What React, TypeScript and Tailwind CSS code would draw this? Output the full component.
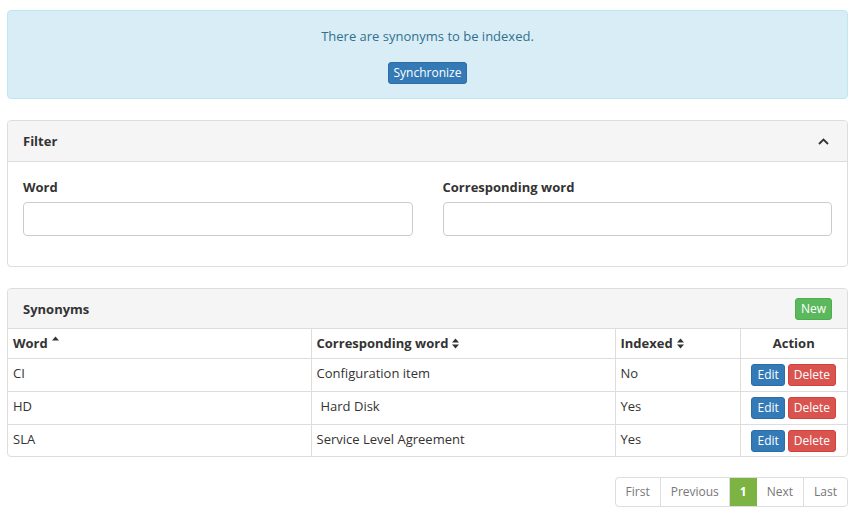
import React from "react";

const SortBoth = () => (
  <svg width="7" height="11" viewBox="0 0 7 11" className="inline-block ml-[4px] -mt-[2px]">
    <path d="M0 4.5 L3.5 0.5 L7 4.5 Z" fill="#333" />
    <path d="M0 6.5 L3.5 10.5 L7 6.5 Z" fill="#333" />
  </svg>
);

const SortUp = () => (
  <svg width="7" height="11" viewBox="0 0 7 11" className="inline-block ml-[4px] -mt-[6px]">
    <path d="M0 4.5 L3.5 0.5 L7 4.5 Z" fill="#333" />
  </svg>
);

const rows = [
  { w: "CI", c: "Configuration item", i: "No", pad: false },
  { w: "HD", c: "Hard Disk", i: "Yes", pad: true },
  { w: "SLA", c: "Service Level Agreement", i: "Yes", pad: false },
];

export default function App() {
  return (
    <div
      className="bg-white w-[864px] h-[519px] text-[#333] text-[13px] leading-[18px]"
      style={{ fontFamily: '"Open Sans", "Noto Sans", sans-serif' }}
    >
      <div className="ml-[7px] w-[841px] pt-[10px]">
        {/* Alert */}
        <div className="border border-[#bce8f1] bg-[#d9edf7] rounded-[4px] pt-[16px] pb-[14px] flex flex-col items-center">
          <p className="text-[#31708f] leading-[18px]">There are synonyms to be indexed.</p>
          <button className="mt-[17px] h-[22px] px-[5px] bg-[#337ab7] border border-[#2e6da4] rounded-[3px] text-white text-[12px] leading-[18px]">
            Synchronize
          </button>
        </div>

        {/* Filter panel */}
        <div className="mt-[21px] border border-[#ddd] rounded-[4px] overflow-hidden">
          <div className="h-[41px] bg-[#f5f5f5] border-b border-[#ddd] flex items-center justify-between pl-[15px] pr-[18px]">
            <span className="font-bold">Filter</span>
            <svg width="11" height="7" viewBox="0 0 11 7">
              <path d="M1 6 L5.5 1.5 L10 6" stroke="#333" strokeWidth="1.8" fill="none" />
            </svg>
          </div>
          <div className="pt-[16px] pb-[30px] px-[15px] grid grid-cols-2 gap-x-[30px]">
            <div>
              <label className="block font-bold mb-[6px]">Word</label>
              <input className="block w-full h-[34px] border border-[#ccc] rounded-[4px] bg-white" />
            </div>
            <div>
              <label className="block font-bold mb-[6px]">Corresponding word</label>
              <input className="block w-full h-[34px] border border-[#ccc] rounded-[4px] bg-white" />
            </div>
          </div>
        </div>

        {/* Synonyms panel */}
        <div className="mt-[21px] border border-[#ddd] rounded-[4px] overflow-hidden">
          <div className="h-[40px] bg-[#f5f5f5] border-b border-[#ddd] flex items-center justify-between pl-[15px] pr-[15px]">
            <span className="font-bold">Synonyms</span>
            <button className="h-[22px] px-[5px] bg-[#5cb85c] border border-[#4cae4c] rounded-[3px] text-white text-[12px] leading-[18px]">
              New
            </button>
          </div>
          <table className="w-full border-collapse">
            <thead>
              <tr className="h-[29px] border-b border-[#ddd]">
                <th className="w-[303px] text-left font-bold px-[5px] border-r border-[#ddd]">
                  Word<SortUp />
                </th>
                <th className="w-[304px] text-left font-bold px-[5px] border-r border-[#ddd]">
                  Corresponding word<SortBoth />
                </th>
                <th className="w-[125px] text-left font-bold px-[5px] border-r border-[#ddd]">
                  Indexed<SortBoth />
                </th>
                <th className="text-center font-bold px-[5px]">Action</th>
              </tr>
            </thead>
            <tbody>
              {rows.map((r, idx) => (
                <tr
                  key={r.w}
                  className={idx < rows.length - 1 ? "h-[33px] border-b border-[#ddd]" : "h-[32px]"}
                >
                  <td className="px-[5px] pt-[5px] border-r border-[#ddd] align-top">{r.w}</td>
                  <td className="px-[5px] pt-[5px] border-r border-[#ddd] align-top">
                    {r.pad ? <span className="pl-[4px]">{r.c}</span> : r.c}
                  </td>
                  <td className="px-[5px] pt-[5px] border-r border-[#ddd] align-top">{r.i}</td>
                  <td className="px-[5px] pt-[5px] align-top">
                    <div className="flex justify-center gap-[3px]">
                      <button className="h-[22px] px-[5px] bg-[#337ab7] border border-[#2e6da4] rounded-[3px] text-white text-[12px] leading-[18px]">
                        Edit
                      </button>
                      <button className="h-[22px] px-[5px] bg-[#d9534f] border border-[#d43f3a] rounded-[3px] text-white text-[12px] leading-[18px]">
                        Delete
                      </button>
                    </div>
                  </td>
                </tr>
              ))}
            </tbody>
          </table>
        </div>

        {/* Pagination */}
        <div className="mt-[20px] flex justify-end">
          <div className="flex h-[30px] border border-[#ddd] rounded-[4px] overflow-hidden text-[#777] text-[12px]">
            <span className="px-[10px] flex items-center border-r border-[#ddd]">First</span>
            <span className="px-[10px] flex items-center border-r border-[#ddd]">Previous</span>
            <span className="px-[10px] flex items-center bg-[#7cb342] text-white font-bold">1</span>
            <span className="px-[10px] flex items-center border-r border-[#ddd]">Next</span>
            <span className="px-[10px] flex items-center">Last</span>
          </div>
        </div>
      </div>
    </div>
  );
}
